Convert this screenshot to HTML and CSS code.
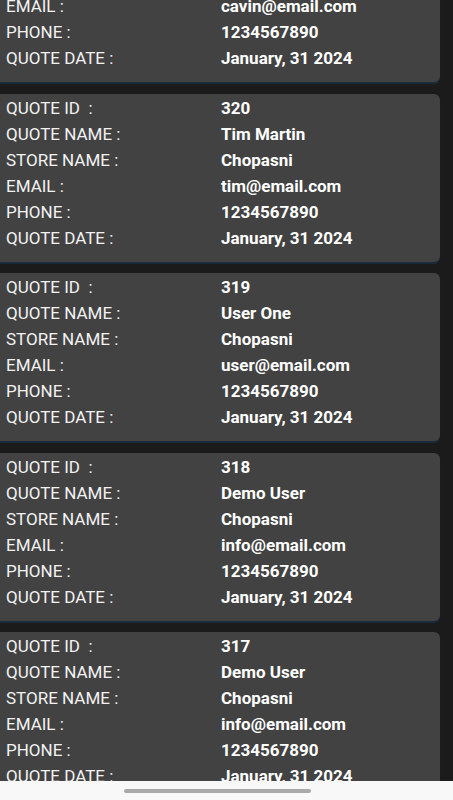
FILE: index.html
```html
<!DOCTYPE html>
<html>
<head>
<meta charset="utf-8">
<link rel="stylesheet" href="styles.css">
</head>
<body>
<div class="list">
  <div class="card">
    <div class="row"><span class="label">QUOTE ID  :</span><span class="value">321</span></div>
    <div class="row"><span class="label">QUOTE NAME :</span><span class="value">Cavin</span></div>
    <div class="row"><span class="label">STORE NAME :</span><span class="value">Chopasni</span></div>
    <div class="row"><span class="label">EMAIL :</span><span class="value">cavin@email.com</span></div>
    <div class="row"><span class="label">PHONE :</span><span class="value">1234567890</span></div>
    <div class="row"><span class="label">QUOTE DATE :</span><span class="value">January, 31 2024</span></div>
  </div>
  <div class="card">
    <div class="row"><span class="label">QUOTE ID  :</span><span class="value">320</span></div>
    <div class="row"><span class="label">QUOTE NAME :</span><span class="value">Tim Martin</span></div>
    <div class="row"><span class="label">STORE NAME :</span><span class="value">Chopasni</span></div>
    <div class="row"><span class="label">EMAIL :</span><span class="value">tim@email.com</span></div>
    <div class="row"><span class="label">PHONE :</span><span class="value">1234567890</span></div>
    <div class="row"><span class="label">QUOTE DATE :</span><span class="value">January, 31 2024</span></div>
  </div>
  <div class="card">
    <div class="row"><span class="label">QUOTE ID  :</span><span class="value">319</span></div>
    <div class="row"><span class="label">QUOTE NAME :</span><span class="value">User One</span></div>
    <div class="row"><span class="label">STORE NAME :</span><span class="value">Chopasni</span></div>
    <div class="row"><span class="label">EMAIL :</span><span class="value">user@email.com</span></div>
    <div class="row"><span class="label">PHONE :</span><span class="value">1234567890</span></div>
    <div class="row"><span class="label">QUOTE DATE :</span><span class="value">January, 31 2024</span></div>
  </div>
  <div class="card">
    <div class="row"><span class="label">QUOTE ID  :</span><span class="value">318</span></div>
    <div class="row"><span class="label">QUOTE NAME :</span><span class="value">Demo User</span></div>
    <div class="row"><span class="label">STORE NAME :</span><span class="value">Chopasni</span></div>
    <div class="row"><span class="label">EMAIL :</span><span class="value">info@email.com</span></div>
    <div class="row"><span class="label">PHONE :</span><span class="value">1234567890</span></div>
    <div class="row"><span class="label">QUOTE DATE :</span><span class="value">January, 31 2024</span></div>
  </div>
  <div class="card">
    <div class="row"><span class="label">QUOTE ID  :</span><span class="value">317</span></div>
    <div class="row"><span class="label">QUOTE NAME :</span><span class="value">Demo User</span></div>
    <div class="row"><span class="label">STORE NAME :</span><span class="value">Chopasni</span></div>
    <div class="row"><span class="label">EMAIL :</span><span class="value">info@email.com</span></div>
    <div class="row"><span class="label">PHONE :</span><span class="value">1234567890</span></div>
    <div class="row"><span class="label">QUOTE DATE :</span><span class="value">January, 31 2024</span></div>
  </div>
</div>
<div class="navbar"><div class="handle"></div></div>
</body>
</html>
```
FILE: styles.css
```css
html, body {
  margin: 0;
  padding: 0;
  height: 800px;
  overflow: hidden;
  background: #1b1b1b;
  font-family: Roboto, "Liberation Sans", sans-serif;
}
.list {
  display: flex;
  flex-direction: column;
  gap: 11.5px;
  margin-top: -86px;
  margin-left: -10px;
  width: 450px;
}
.card {
  background: #424242;
  border-radius: 6px;
  padding: 1px 0 11px 16px;
  box-shadow: 0 2px 1px #1a2c3e;
  height: 156px;
}
.row {
  display: grid;
  grid-template-columns: 215px 1fr;
  height: 26px;
  line-height: 26px;
  font-size: 17px;
}
.label {
  color: #f2f2f2;
  white-space: pre;
}
.value {
  color: #ffffff;
  font-weight: 700;
}
.navbar {
  position: fixed;
  left: 0;
  right: 0;
  bottom: 0;
  height: 19px;
  background: #f8f8f8;
  display: flex;
  align-items: center;
  padding-left: 124px;
}
.handle {
  width: 187px;
  height: 4px;
  border-radius: 2px;
  background: #a9a9a9;
}
```
